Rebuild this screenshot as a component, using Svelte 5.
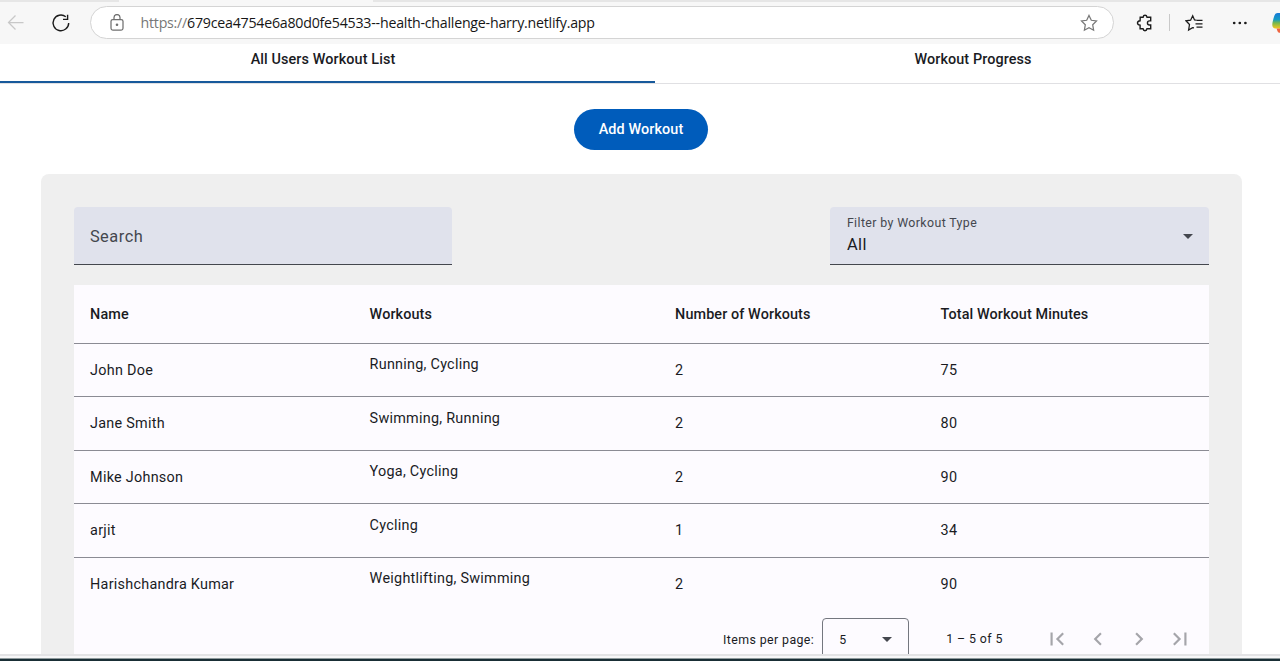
<script>
  const users = [
    { name: 'John Doe', workouts: 'Running, Cycling', count: 2, minutes: 75 },
    { name: 'Jane Smith', workouts: 'Swimming, Running', count: 2, minutes: 80 },
    { name: 'Mike Johnson', workouts: 'Yoga, Cycling', count: 2, minutes: 90 },
    { name: 'arjit', workouts: 'Cycling', count: 1, minutes: 34 },
    { name: 'Harishchandra Kumar', workouts: 'Weightlifting, Swimming', count: 2, minutes: 90 },
  ];
  const pagerIcons = [
    'M18.41 16.59 13.82 12l4.59-4.59L17 6l-6 6 6 6zM6 6h2v12H6z',
    'M15.41 7.41 14 6l-6 6 6 6 1.41-1.41L10.83 12z',
    'M10 6 8.59 7.41 13.17 12l-4.58 4.59L10 18l6-6z',
    'M5.59 7.41 10.18 12l-4.59 4.59L7 18l6-6-6-6zM16 6h2v12h-2z',
  ];
</script>

<div class="window">
  <header class="browser">
    <div class="strip"><span></span><i></i><span></span></div>
    <div class="toolbar">
      <svg class="back" width="18" height="18" viewBox="0 0 18 18"><path d="M16.5 8.5H1.5M8.5 1.5l-7 7 7 7" /></svg>
      <svg class="reload" width="20" height="20" viewBox="0 0 20 20"><path d="M14.8 3.8A7.8 7.8 0 1 0 17.7 10M16.6 1.8v4.6H12" /></svg>
      <div class="address">
        <svg class="lock" width="16" height="18" viewBox="0 0 16 18"><rect x="2" y="5.5" width="12" height="10.5" rx="1.8" /><path d="M5 5.5v-2a3 3 0 0 1 6 0v2" /><circle cx="8" cy="10.7" r=".7" /></svg>
        <span class="url"><em>https://</em>679cea4754e6a80d0fe54533--health-challenge-harry.netlify.app</span>
        <svg class="star" width="18" height="18" viewBox="0 0 18 18"><path d="m9 1.4 2.3 4.9 5.2.7-3.8 3.8.9 5.4L9 13.7l-4.6 2.5.9-5.4L1.5 7l5.2-.7z" /></svg>
      </div>
      <svg class="puzzle" width="18" height="18" viewBox="0 0 18 18"><path d="M4.2 3.2h2.9C7.3 2 8 1.3 9 1.3s1.8.7 2 1.9h3.7v3.7h-1.2a2 2 0 0 0 0 4.1h1.2v3.7H11c-.2 1.3-.9 2-2 2s-1.8-.7-2-2H4.1v-3.5C2.6 11 1.5 10.2 1.5 9s1.1-2 2.6-2.2z" /></svg>
      <span class="divider"></span>
      <svg class="favorites" width="19" height="18" viewBox="0 0 19 18"><path d="M11.3 6.2 9.5 6 7.7 1.7 5.6 6.2 1 6.8l3.5 3.7-.9 5.5 4-2.3 1.4.2M11.5 6.3h6M10.5 9.8h7M11.5 13.2h6" /></svg>
      <svg class="more" width="16" height="6" viewBox="0 0 16 6"><circle cx="2.2" cy="3" r="1.35" /><circle cx="7.8" cy="3" r="1.35" /><circle cx="13.4" cy="3" r="1.35" /></svg>
      <svg class="assistant" width="9" height="24" viewBox="0 0 9 24">
        <defs><linearGradient id="tint" x1="0" y1="0" x2="0" y2="1"><stop offset="0" stop-color="#1679d8" /><stop offset=".42" stop-color="#159bc4" /><stop offset=".65" stop-color="#79b84b" /><stop offset="1" stop-color="#f6c51f" /></linearGradient></defs>
        <path d="M9 2H6.6C3.8 2 3.3 5 2.3 8.3 1.2 12 .2 17.2 4 17.4h5z" fill="url(#tint)" />
        <path d="M5.5 17.4H9v4.4c-2.4 0-2.6-2.2-3.5-4.4z" fill="#ef6540" />
      </svg>
    </div>
  </header>

  <main>
    <nav><button class="active">All Users Workout List</button><button>Workout Progress</button></nav>
    <button class="add">Add Workout</button>
    <section class="card">
      <div class="filters">
        <div class="field search">Search</div>
        <div class="field select">
          <div><small>Filter by Workout Type</small><p>All</p></div>
          <svg width="10" height="5" viewBox="0 0 10 5"><path d="M0 0h10L5 5z" /></svg>
        </div>
      </div>
      <div class="table">
        <div class="row head"><span>Name</span><span>Workouts</span><span>Number of Workouts</span><span>Total Workout Minutes</span></div>
        {#each users as user}
          <div class="row"><span>{user.name}</span><span class="raised">{user.workouts}</span><span>{user.count}</span><span>{user.minutes}</span></div>
        {/each}
      </div>
      <div class="pager">
        <span class="label">Items per page:</span>
        <div class="size"><span>5</span><svg width="10" height="5" viewBox="0 0 10 5"><path d="M0 0h10L5 5z" /></svg></div>
        <span class="range">1 – 5 of 5</span>
        <div class="arrows">
          {#each pagerIcons as icon}
            <svg width="26" height="26" viewBox="0 0 24 24"><path d={icon} /></svg>
          {/each}
        </div>
      </div>
    </section>
  </main>
  <footer></footer>
</div>

<style>
  :global(body) { margin: 0; overflow: hidden; }
  * { box-sizing: border-box; }
  .window { width: 1280px; height: 661px; display: flex; flex-direction: column; overflow: hidden; background: #fff; color: #1a1b1f; font-family: Roboto, sans-serif; }
  svg { display: block; flex: none; }
  button { border: 0; padding: 0; background: none; font: inherit; color: inherit; }

  .browser { height: 43.5px; flex: none; background: #f7f7f7; }
  .strip { height: 2px; display: grid; grid-template-columns: 119px 254px 1fr; }
  .strip span { background: #e6e6e6; }
  .toolbar { height: 41px; display: flex; align-items: center; }
  .toolbar svg { fill: none; stroke: #1b1b1b; stroke-width: 1.25; }
  .toolbar .back { margin-left: 7px; stroke: #c8c8c8; }
  .toolbar .reload { margin-left: 26px; stroke-width: 1.4; }
  .address { width: 1025px; height: 33px; margin-left: 19px; padding: 0 15px 0 18px; display: flex; align-items: center; background: #fff; border: 1px solid #d4d4d4; border-radius: 17px; }
  .address .lock { stroke: #707070; }
  .address .lock circle { fill: #606060; }
  .address .star { stroke: #777; margin-left: auto; }
  .url { margin-left: 15.5px; font: 14.2px "Open Sans", sans-serif; letter-spacing: -.23px; white-space: nowrap; color: #161616; }
  .url em { font-style: normal; color: #777; }
  .toolbar .puzzle { margin-left: 22px; stroke-width: 1.4; }
  .divider { width: 1px; height: 17px; margin-left: 15px; background: #c9c9c9; }
  .favorites { margin-left: 15px; }
  .toolbar .more { margin-left: 28px; fill: #1b1b1b; stroke: none; }
  .toolbar .assistant { margin-left: 23px; stroke: none; }

  main { flex: 1; min-height: 0; overflow: hidden; display: flex; flex-direction: column; align-items: center; }
  nav { width: 100%; height: 40px; flex: none; display: grid; grid-template-columns: 655px 1fr; border-bottom: 1px solid #e0e0e3; }
  nav button { padding: 0 9px 7px 0; font-size: 14.4px; font-weight: 500; letter-spacing: .1px; }
  nav button:last-child { padding-right: 0; padding-left: 11px; }
  nav .active { border-bottom: 2px solid #17599b; margin-bottom: -1px; padding: 0 9px 5px 0; height: 39.5px; }
  .add { width: 134px; height: 41px; flex: none; margin: 25px 0 24.5px 2px; border-radius: 21px; background: #005cbb; color: #fff; font-size: 14.4px; font-weight: 500; letter-spacing: .1px; }
  .card { width: 1201px; height: 600px; flex: none; margin-left: 3px; padding: 33px 33.5px 33px 32.5px; background: #efefef; border-radius: 8px; }
  .filters { display: flex; justify-content: space-between; }
  .field { width: 378.5px; height: 58px; padding: 0 16.4px; display: flex; align-items: center; background: #e0e2ec; border-bottom: 1px solid #44474e; border-radius: 4px 4px 0 0; color: #44474e; font-size: 16.4px; letter-spacing: .5px; }
  .search { padding-top: 2px; }
  .select { justify-content: space-between; padding: 0 16px 0 16.9px; }
  .select small { display: block; font-size: 12.35px; line-height: 16px; letter-spacing: .39px; }
  .select p { margin: 3px 0 0; color: #1a1b1f; line-height: 22px; }
  .select svg { margin-top: 2px; }
  .select svg, .size svg { fill: #44474e; }
  .table { margin-top: 20px; background: #fdfbff; }
  .row { height: 53.5px; display: grid; grid-template-columns: 279.5px 305.5px 265.5px 1fr; align-items: center; padding: 2px 0 0 16.6px; border-top: 1px solid #8b8b94; font-size: 14.4px; line-height: 20px; letter-spacing: .256px; }
  .head { height: 57.5px; border-top: 0; font-weight: 500; letter-spacing: .1px; }
  .raised { padding-bottom: 11px; }
  .pager { height: 58px; padding-right: 15.6px; display: flex; align-items: center; justify-content: flex-end; background: #fdfbff; font-size: 12.35px; letter-spacing: .41px; }
  .label { padding-top: 1px; }
  .size { width: 87px; height: 42px; margin-left: 8px; padding: 1px 16px 0; display: flex; align-items: center; justify-content: space-between; border: 1px solid #74777f; border-radius: 4px; }
  .range { margin: 0 40.8px 0 37px; }
  .arrows { display: flex; gap: 15.1px; fill: #a5a5aa; }
  footer { height: 7px; flex: none; background: #192e35; border-top: 2px solid #e3e3e5; box-shadow: inset 0 2px #f7f7f8, inset 0 3px #8f9a9c; }
</style>
